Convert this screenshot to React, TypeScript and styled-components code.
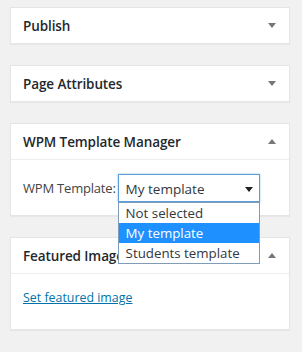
import React from 'react'
import styled, { createGlobalStyle } from 'styled-components'

const GlobalStyle = createGlobalStyle`
	html, body {
		margin: 0;
		padding: 0;
		background: #f1f1f1;
	}
	body {
		font-family: "Open Sans", "Noto Sans", sans-serif;
		color: #444;
	}
`

const Sidebar = styled.div`
	width: 280px;
	padding: 7px 10px;
`

const Postbox = styled.div`
	background: #fff;
	border: 1px solid #e5e5e5;
	box-shadow: 0 1px 1px rgba(0, 0, 0, 0.04);
	margin-bottom: 21px;
`

const Header = styled.div<{ $open?: boolean }>`
	height: 35px;
	display: flex;
	align-items: center;
	justify-content: space-between;
	padding: 0 13px 0 12px;
	border-bottom: ${p => (p.$open ? '1px solid #eee' : 'none')};
`

const Title = styled.h2`
	margin: 0;
	font-size: 13.5px;
	font-weight: 600;
	color: #23282d;
	letter-spacing: -0.1px;
`

const Inside = styled.div<{ $pad: string }>`
	padding: ${p => p.$pad};
	display: flex;
	align-items: center;
	gap: 2px;
`

const Label = styled.label`
	font-size: 13px;
	color: #444;
	letter-spacing: -0.2px;
`

const SelectWrap = styled.div`
	position: relative;
`

const SelectBox = styled.div`
	width: 142px;
	height: 28px;
	box-sizing: border-box;
	border: 1px solid #5b9dd9;
	box-shadow: 0 0 2px rgba(30, 140, 190, 0.5);
	display: flex;
	align-items: center;
	justify-content: space-between;
	padding: 2px 6px 0 7px;
	font-size: 13.5px;
	color: #32373c;
	background: #fff;
`

const List = styled.ul`
	position: absolute;
	top: 100%;
	left: 0;
	width: 142px;
	box-sizing: border-box;
	margin: 0;
	padding: 0;
	list-style: none;
	background: #fff;
	border: 1px solid #7f9db9;
	z-index: 10;
`

const Option = styled.li<{ $active?: boolean }>`
	height: 20px;
	line-height: 20px;
	padding: 0 7px;
	font-size: 13.3px;
	color: ${p => (p.$active ? '#fff' : '#32373c')};
	background: ${p => (p.$active ? '#1e90ff' : 'transparent')};
	white-space: nowrap;
`

const Link = styled.a`
	font-size: 12.4px;
	line-height: 18px;
	color: #0073aa;
	text-decoration: underline;
`

const Toggle: React.FC<{ up?: boolean; color?: string }> = ({ up, color = '#72777c' }) => (
	<svg width="8" height="5" viewBox="0 0 8 5">
		<path d={up ? 'M0 5 L4 0 L8 5 Z' : 'M0 0 L8 0 L4 5 Z'} fill={color} />
	</svg>
)

const App: React.FC = () => {
	return (
		<>
			<GlobalStyle />
			<Sidebar>
				<Postbox>
					<Header>
						<Title>Publish</Title>
						<Toggle />
					</Header>
				</Postbox>

				<Postbox>
					<Header>
						<Title>Page Attributes</Title>
						<Toggle />
					</Header>
				</Postbox>

				<Postbox>
					<Header $open>
						<Title>WPM Template Manager</Title>
						<Toggle up />
					</Header>
					<Inside $pad="14px 12px 13px 12px">
						<Label>WPM Template:</Label>
						<SelectWrap>
							<SelectBox>
								<span>My template</span>
								<Toggle color="#222" />
							</SelectBox>
							<List>
								<Option>Not selected</Option>
								<Option $active>My template</Option>
								<Option>Students template</Option>
							</List>
						</SelectWrap>
					</Inside>
				</Postbox>

				<Postbox>
					<Header $open>
						<Title>Featured Image</Title>
						<Toggle up />
					</Header>
					<Inside $pad="15px 12px 22px 12px">
						<Link href="#">Set featured image</Link>
					</Inside>
				</Postbox>
			</Sidebar>
		</>
	)
}

export default App
